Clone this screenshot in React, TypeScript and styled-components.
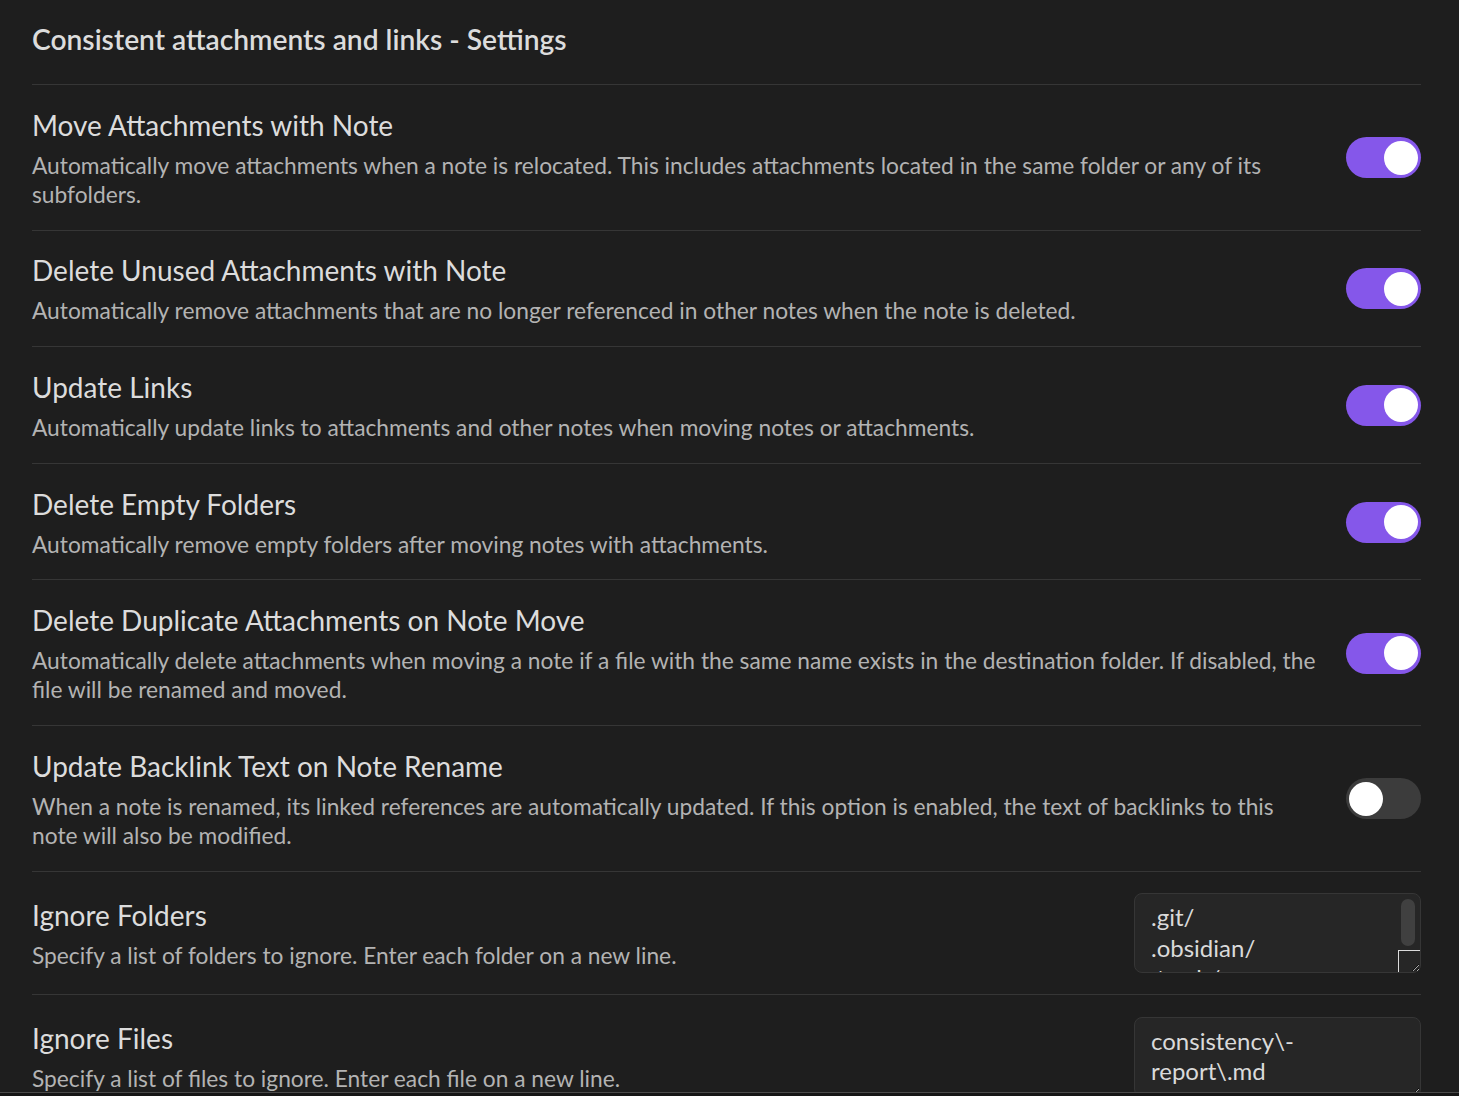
import React from "react";
import styled, { createGlobalStyle } from "styled-components";

const GlobalStyle = createGlobalStyle`
  html, body { margin: 0; padding: 0; background: #161616; }
  body { font-family: Lato, "Open Sans", sans-serif; -webkit-font-smoothing: antialiased; }
  * { box-sizing: border-box; }
`;

const Frame = styled.div`
  height: 1096px;
  background: #161616;
  overflow: hidden;
`;

const Panel = styled.div`
  height: 1093px;
  background: #1e1e1e;
  border-bottom: 1px solid #4a4a4a;
  overflow: hidden;
  padding: 0 38px 0 32px;
`;

const Heading = styled.div`
  padding: 21px 0 27px;
  line-height: 36px;
  font-size: 28.2px;
  font-weight: 600;
  color: #dcdcdc;
  border-bottom: 1px solid #363636;
`;

const Item = styled.div`
  display: flex;
  align-items: center;
  padding: 21.8px 0 20.8px;
  border-bottom: 1px solid #363636;
`;

const Info = styled.div`
  flex: 1 1 auto;
  min-width: 0;
  margin-right: 30px;
`;

const Name = styled.div`
  font-size: 28px;
  line-height: 36px;
  color: #dcdcdc;
`;

const Desc = styled.div`
  margin-top: 8px;
  font-size: 22.75px;
  line-height: 29px;
  color: #b3b3b3;
`;

const Toggle = styled.div<{ $on: boolean }>`
  position: relative;
  flex: 0 0 auto;
  width: 75px;
  height: 41px;
  border-radius: 21px;
  background: ${(p) => (p.$on ? "#8557ea" : "#3c3c3c")};
`;

const Knob = styled.div<{ $on: boolean }>`
  position: absolute;
  top: 3.5px;
  left: ${(p) => (p.$on ? "37.5px" : "3px")};
  width: 34px;
  height: 34px;
  border-radius: 50%;
  background: #ffffff;
`;

const AreaBox = styled.div`
  position: relative;
  flex: 0 0 auto;
  width: 287px;
  height: 80px;
`;

const Area = styled.textarea`
  display: block;
  width: 100%;
  height: 100%;
  padding: 8px 16px;
  background: #262626;
  border: 1px solid #363636;
  border-radius: 8px;
  color: #dadada;
  font-family: Lato, "Open Sans", sans-serif;
  font-size: 24px;
  line-height: 30.5px;
  resize: vertical;
  outline: none;
  overflow: hidden;
`;

const Thumb = styled.div`
  position: absolute;
  top: 6px;
  right: 6px;
  width: 14px;
  height: 47px;
  border-radius: 7px;
  background: #404040;
  pointer-events: none;
`;

const Corner = styled.div`
  position: absolute;
  right: 1px;
  bottom: 1px;
  width: 22px;
  height: 22px;
  border-top: 1px solid #dcdcdc;
  border-left: 1px solid #dcdcdc;
  pointer-events: none;
`;

type Row = { name: string; desc: string; on: boolean };

const toggles: Row[] = [
  {
    name: "Move Attachments with Note",
    desc: "Automatically move attachments when a note is relocated. This includes attachments located in the same folder or any of its subfolders.",
    on: true,
  },
  {
    name: "Delete Unused Attachments with Note",
    desc: "Automatically remove attachments that are no longer referenced in other notes when the note is deleted.",
    on: true,
  },
  {
    name: "Update Links",
    desc: "Automatically update links to attachments and other notes when moving notes or attachments.",
    on: true,
  },
  {
    name: "Delete Empty Folders",
    desc: "Automatically remove empty folders after moving notes with attachments.",
    on: true,
  },
  {
    name: "Delete Duplicate Attachments on Note Move",
    desc: "Automatically delete attachments when moving a note if a file with the same name exists in the destination folder. If disabled, the file will be renamed and moved.",
    on: true,
  },
  {
    name: "Update Backlink Text on Note Rename",
    desc: "When a note is renamed, its linked references are automatically updated. If this option is enabled, the text of backlinks to this note will also be modified.",
    on: false,
  },
];

export default function App() {
  return (
    <Frame>
      <GlobalStyle />
      <Panel>
        <Heading>Consistent attachments and links - Settings</Heading>
        {toggles.map((r) => (
          <Item key={r.name}>
            <Info>
              <Name>{r.name}</Name>
              <Desc>{r.desc}</Desc>
            </Info>
            <Toggle $on={r.on}>
              <Knob $on={r.on} />
            </Toggle>
          </Item>
        ))}
        <Item>
          <Info>
            <Name>Ignore Folders</Name>
            <Desc>Specify a list of folders to ignore. Enter each folder on a new line.</Desc>
          </Info>
          <AreaBox>
            <Area readOnly spellCheck={false} value={".git/\n.obsidian/\n.trash/"} />
            <Thumb />
            <Corner />
          </AreaBox>
        </Item>
        <Item>
          <Info>
            <Name>Ignore Files</Name>
            <Desc>Specify a list of files to ignore. Enter each file on a new line.</Desc>
          </Info>
          <AreaBox>
            <Area readOnly spellCheck={false} value={"consistency\\-report\\.md"} />
          </AreaBox>
        </Item>
      </Panel>
    </Frame>
  );
}
